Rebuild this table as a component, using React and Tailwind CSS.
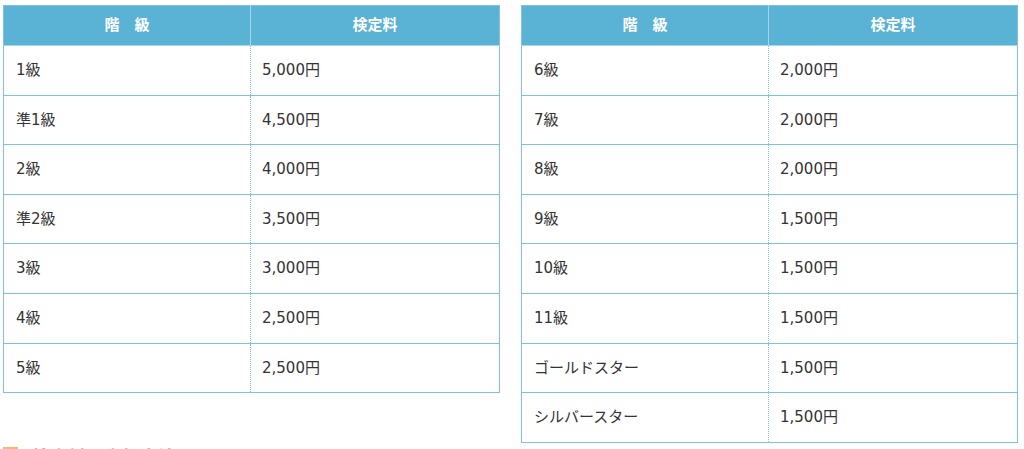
const left = [
  ["1級", "5,000円"],
  ["準1級", "4,500円"],
  ["2級", "4,000円"],
  ["準2級", "3,500円"],
  ["3級", "3,000円"],
  ["4級", "2,500円"],
  ["5級", "2,500円"],
];
const right = [
  ["6級", "2,000円"],
  ["7級", "2,000円"],
  ["8級", "2,000円"],
  ["9級", "1,500円"],
  ["10級", "1,500円"],
  ["11級", "1,500円"],
  ["ゴールドスター", "1,500円"],
  ["シルバースター", "1,500円"],
];

function FeeTable({ rows }) {
  return (
    <table className="w-[497px] border-collapse border border-[#7cc3e3] table-fixed">
      <thead>
        <tr className="h-[40px] bg-[#5ab2d5] text-white">
          <th className="w-[247px] border-r border-b border-[#a3d6ec] text-[15px] font-bold">
            階　級
          </th>
          <th className="border-b border-[#a3d6ec] text-[15px] font-bold">検定料</th>
        </tr>
      </thead>
      <tbody>
        {rows.map(([a, b], i) => (
          <tr key={i} className="h-[49.6px] border-t border-[#7cc3e3] text-[15px] text-[#333333]">
            <td className="pl-[12px] border-r border-dotted border-r-[#7cc3e3]">{a}</td>
            <td className="pl-[11px]">{b}</td>
          </tr>
        ))}
      </tbody>
    </table>
  );
}

export default function App() {
  return (
    <div
      className="w-[1024px] h-[449px] overflow-hidden bg-white pl-[3px] pt-[5px]"
      style={{ fontFamily: '"DejaVu Sans", "Noto Sans CJK JP", sans-serif' }}
    >
      <div className="flex items-start gap-[21px]">
        <FeeTable rows={left} />
        <FeeTable rows={right} />
      </div>
      <div className="mt-[2px] flex items-start gap-[14px] text-[18px] font-bold text-[#f6a95e]">
        <span className="inline-block mt-[2px] w-[15px] h-[15px] bg-[#f8b57a]"></span>
        <span className="leading-[22px]" style={{ fontFamily: '"Noto Sans CJK JP", sans-serif' }}>
          検定料の支払方法について
        </span>
      </div>
    </div>
  );
}
